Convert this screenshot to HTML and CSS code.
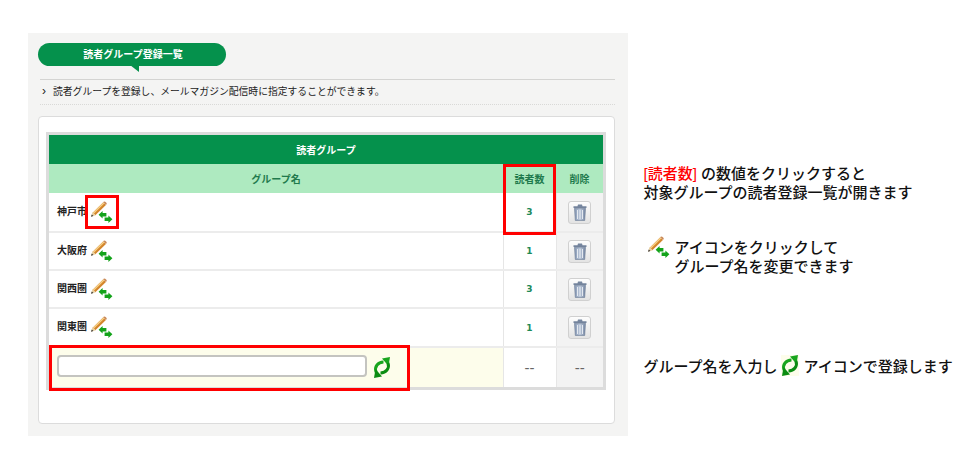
FILE: index.html
```html
<!DOCTYPE html>
<html lang="ja">
<head>
<meta charset="utf-8">
<title>読者グループ登録一覧</title>
<link rel="stylesheet" href="styles.css">
</head>
<body>
<svg class="defs" width="0" height="0" aria-hidden="true">
  <defs>
    <linearGradient id="can" x1="0" y1="0" x2="1" y2="0">
      <stop offset="0" stop-color="#8496b2"/><stop offset=".5" stop-color="#bcc8da"/><stop offset="1" stop-color="#7586a2"/>
    </linearGradient>
    <symbol id="edit" viewBox="0 0 23 23">
      <path d="M4 13 14.6 2.6" stroke="#d4862c" stroke-width="3.8" fill="none"/>
      <path d="M3.4 12.2 13.8 2" stroke="#f7d28a" stroke-width="1.3" fill="none"/>
      <path d="M13.2 1 14.4 .4C15.4 .4 16.6 1.6 16.8 2.7L16 3.9Z" fill="#c98a5a"/>
      <path d="M1 15.8 2.6 11 5.6 14.2Z" fill="#e8cfa0"/>
      <path d="M1 15.8 1.8 13.4 3.4 15Z" fill="#333"/>
      <path d="M8.6 13.7 12.6 10V12H16.4V15.4H12.6V17.4Z" fill="#13a31a"/>
      <path d="M22.4 18.2 18.4 14.5V16.5H14.6V19.9H18.4V21.9Z" fill="#13a31a"/>
    </symbol>
    <symbol id="refresh" viewBox="0 0 18 21">
      <path d="M3 15C1.2 9.5 5 5.2 10.5 5" stroke="#18a51e" stroke-width="3" fill="none"/>
      <path d="M9 1.5 17 0 15.5 9Z" fill="#18a51e"/>
      <path d="M15 6C16.8 11.5 13 15.8 7.5 16" stroke="#0b8c12" stroke-width="3" fill="none"/>
      <path d="M9 19.5 1 21 2.5 12Z" fill="#0b8c12"/>
    </symbol>
    <symbol id="trash" viewBox="0 0 14 17">
      <path d="M0.5 2.2H4.5L5 .6H9L9.5 2.2H13.5V4H.5Z" fill="#75859e"/>
      <path d="M1.5 4.3H12.5L11.7 16.5H2.3Z" fill="url(#can)" stroke="#6a7a93" stroke-width=".6"/>
      <path d="M4.5 6V15M7 6V15M9.5 6V15" stroke="#e4e9f0" stroke-width="1"/>
    </symbol>
  </defs>
</svg>

<div class="page">
  <main class="panel">
    <div class="title-pill"><h1>読者グループ登録一覧</h1></div>
    <p class="lead"><span class="chev">›</span>読者グループを登録し、メールマガジン配信時に指定することができます。</p>

    <section class="card">
      <div class="table-wrap">
        <table class="groups">
          <colgroup><col class="c-name"><col class="c-count"><col class="c-del"></colgroup>
          <thead>
            <tr class="head-main"><th colspan="3">読者グループ</th></tr>
            <tr class="head-sub"><th>グループ名</th><th>読者数</th><th>削除</th></tr>
          </thead>
          <tbody>
            <tr class="tall">
              <td class="name">神戸市<svg class="ic-edit"><use href="#edit"/></svg></td>
              <td class="count">3</td>
              <td class="del"><span class="trash-btn"><svg class="ic-trash"><use href="#trash"/></svg></span></td>
            </tr>
            <tr>
              <td class="name">大阪府<svg class="ic-edit"><use href="#edit"/></svg></td>
              <td class="count">1</td>
              <td class="del"><span class="trash-btn"><svg class="ic-trash"><use href="#trash"/></svg></span></td>
            </tr>
            <tr>
              <td class="name">関西圏<svg class="ic-edit"><use href="#edit"/></svg></td>
              <td class="count">3</td>
              <td class="del"><span class="trash-btn"><svg class="ic-trash"><use href="#trash"/></svg></span></td>
            </tr>
            <tr class="tall">
              <td class="name">関東圏<svg class="ic-edit"><use href="#edit"/></svg></td>
              <td class="count">1</td>
              <td class="del"><span class="trash-btn"><svg class="ic-trash"><use href="#trash"/></svg></span></td>
            </tr>
            <tr class="new-row">
              <td class="new-name"><span class="new-inner"><input class="group-input" type="text" aria-label="グループ名"><svg class="ic-refresh"><use href="#refresh"/></svg></span></td>
              <td class="dash">--</td>
              <td class="dash del">--</td>
            </tr>
          </tbody>
        </table>
        <div class="mark mark-edit"></div>
        <div class="mark mark-count"></div>
        <div class="mark mark-new"></div>
      </div>
    </section>
  </main>

  <aside class="notes">
    <p class="note note-one"><span class="red">[読者数]</span> の数値をクリックすると<br>対象グループの読者登録一覧が開きます</p>
    <div class="note note-two">
      <svg class="ic-edit note-edit"><use href="#edit"/></svg>
      <p>アイコンをクリックして<br>グループ名を変更できます</p>
    </div>
    <p class="note note-three">グループ名を入力し<svg class="ic-refresh note-refresh"><use href="#refresh"/></svg>アイコンで登録します</p>
  </aside>
</div>
</body>
</html>
```
FILE: styles.css
```css
* { box-sizing: border-box; }
html, body { margin: 0; padding: 0; background: #fff; }
body {
  width: 980px;
  height: 470px;
  overflow: hidden;
  font-family: "Liberation Sans", "Noto Sans CJK JP", sans-serif;
  color: #111;
}
.defs { position: absolute; }
.page { display: flex; align-items: flex-start; padding: 33px 0 0 28px; }

.panel {
  flex: none;
  width: 600px;
  height: 403px;
  padding: 10px 13px 0 10px;
  background: #f4f4f3;
}
.title-pill {
  position: relative;
  width: 188px;
  height: 23px;
  border-radius: 12px;
  background: #05914c;
  display: flex;
  align-items: center;
  justify-content: center;
}
.title-pill::after {
  content: "";
  position: absolute;
  left: 92px;
  top: 22px;
  border-style: solid;
  border-width: 0 9px 7px 0;
  border-color: transparent #05914c transparent transparent;
}
.title-pill h1 {
  margin: 0 0 0 2px;
  font-size: 10px;
  line-height: 14px;
  font-weight: 700;
  color: #fff;
}
.lead {
  margin: 13px 0 0 2px;
  height: 26px;
  border-top: 1px solid #d4d4d2;
  border-bottom: 1px dotted #d9d9d7;
  font-size: 9.8px;
  line-height: 23px;
  color: #222;
  white-space: nowrap;
}
.chev {
  display: inline-block;
  width: 13px;
  padding-left: 2px;
  font-size: 12px;
  line-height: 20px;
}
.card {
  margin-top: 11px;
  width: 577px;
  height: 308px;
  padding: 15px 7px 0 7px;
  background: #fff;
  border: 1px solid #dcdcdc;
  border-radius: 4px;
}
.table-wrap {
  position: relative;
  width: 560px;
  height: 258px;
  border: 3px solid #dcdcdc;
}
.groups {
  width: 554px;
  table-layout: fixed;
  border-collapse: collapse;
  font-size: 10px;
}
.c-name { width: 454px; }
.c-count { width: 53px; }
.c-del { width: 47px; }
.head-main th {
  height: 29px;
  background: #05914c;
  color: #fff;
  font-weight: 700;
  padding: 0;
}
.head-sub th {
  height: 29px;
  background: #aeeac0;
  color: #1f7a4d;
  font-weight: 700;
  padding: 0;
}
.groups td {
  height: 38px;
  padding: 0;
  border-bottom: 2px solid #ececec;
  border-right: 1px solid #e6e6e6;
  text-align: center;
  vertical-align: middle;
}
.groups tr.tall td { height: 39px; }
.groups td.name {
  padding-left: 8px;
  text-align: left;
  font-weight: 700;
  color: #222;
}
.ic-edit {
  width: 23px;
  height: 23px;
  margin-left: 3px;
  vertical-align: middle;
}
.groups td.count { color: #1d8a57; font-weight: 700; font-family: "DejaVu Sans", sans-serif; font-size: 9px; }
.groups td.del { background: #f3f3f3; border-right: 0; }
.trash-btn {
  display: inline-flex;
  width: 23px;
  height: 23px;
  align-items: center;
  justify-content: center;
  border: 1px solid #d0d0d0;
  border-radius: 3px;
  background: linear-gradient(#fdfdfd, #e3e3e3);
  vertical-align: middle;
}
.ic-trash { width: 14px; height: 17px; }
.groups .new-row td { height: 40px; border-bottom: 0; }
.groups td.new-name { background: #fdfdeb; padding-left: 8px; text-align: left; }
.new-inner { display: flex; align-items: center; }
.group-input {
  width: 310px;
  height: 22px;
  margin-bottom: 4px;
  padding: 0;
  background: #fff;
  border: 2px solid #c4c4c0;
  border-radius: 4px;
  outline: 0;
}
.ic-refresh { width: 18px; height: 21px; }
.new-inner .ic-refresh { margin-left: 6px; }
.groups td.dash { color: #666; font-size: 15px; font-weight: 400; }

.mark { position: absolute; border: 3px solid #f00; }
.mark-edit { left: 36px; top: 60px; width: 34px; height: 34px; }
.mark-count { left: 454px; top: 29px; width: 53px; height: 71px; }
.mark-new { left: 0; top: 210px; width: 361px; height: 46px; }

.notes {
  flex: none;
  width: 330px;
  margin-left: 15.5px;
  padding-top: 131px;
  font-size: 15px;
  line-height: 19px;
  font-weight: 500;
  color: #111;
}
.note { margin: 0; white-space: nowrap; }
.red { color: #f00; }
.note-two {
  display: flex;
  align-items: flex-start;
  margin-top: 36px;
}
.note-two p { margin: 0 0 0 5px; }
.note-edit { margin: -2px 0 0 3px; flex: none; }
.note-three { margin-top: 79px; }
.note-refresh { margin: 0 5px 0 3px; vertical-align: -4px; background: #fdfdeb; }
```
